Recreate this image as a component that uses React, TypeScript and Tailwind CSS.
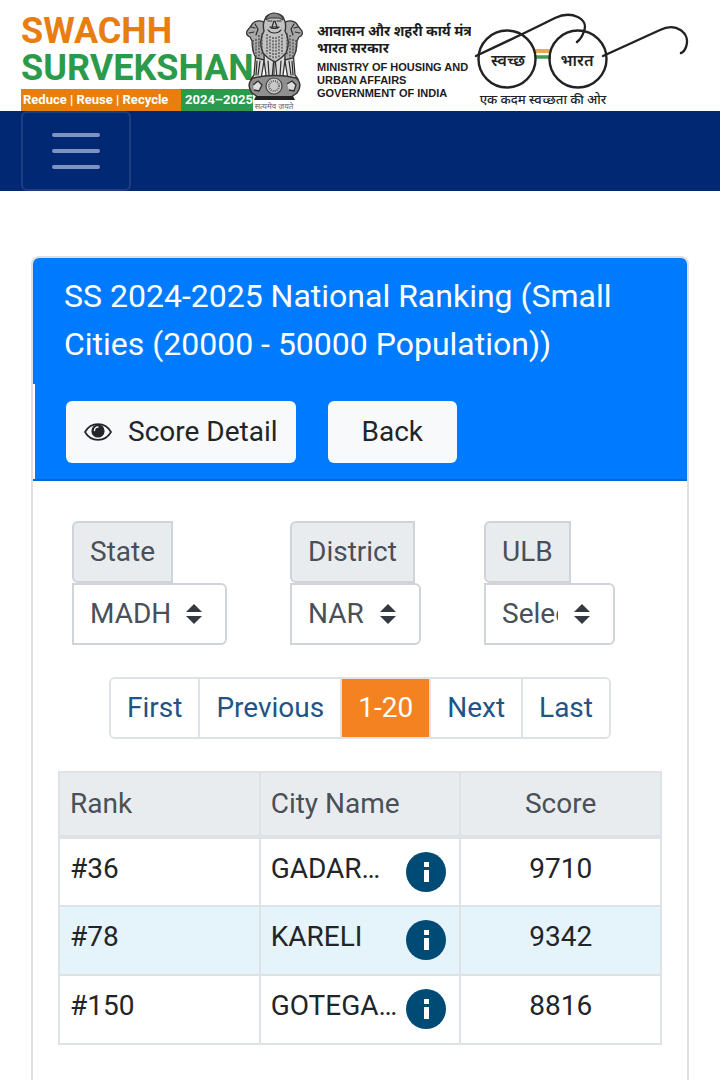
import { useState } from 'react';

const FILTERS = [
  { id: 'state', label: 'State', options: ['MADH'], width: 'w-[155px]' },
  { id: 'district', label: 'District', options: ['NAR'], width: 'w-[131px]' },
  { id: 'ulb', label: 'ULB', options: ['Select'], width: 'w-[131px]' },
];

const PAGES = ['First', 'Previous', '1-20', 'Next', 'Last'];

const CITIES = [
  { rank: '#36', name: 'GADAR…', score: 9710 },
  { rank: '#78', name: 'KARELI', score: 9342 },
  { rank: '#150', name: 'GOTEGA…', score: 8816 },
];

function Emblem() {
  return (
    <svg viewBox="0 0 60 100" className="h-[100px] w-[60px] shrink-0" aria-hidden="true">
      {/* legs */}
      <g fill="#d9d9d9" stroke="#333" strokeWidth="1.3">
        <path d="M11 40l-2 24-3 4h10l4-24zM48 40l2 24 3 4H43l-4-24z" />
        <path d="M18 42l3 22-3 4h9l2-22zM41 42l-3 22 3 4h-9l-2-22z" />
      </g>
      {/* side heads and manes */}
      <g fill="#a9a9a9" stroke="#333" strokeWidth="1.3">
        <path d="M20 12c-5-4-12-2-14 3l-4 5c-1 3 0 5 3 6l2 4c0 6 1 12 4 17l8 2z" />
        <path d="M39 12c5-4 12-2 14 3l4 5c1 3 0 5-3 6l-2 4c0 6-1 12-4 17l-8 2z" />
      </g>
      {/* front lion */}
      <path
        d="M20 8c2-7 17-7 19 0 2 4 2 8 1 12 4 7 4 15 1 22l-5 5-6 4-7-4-5-5c-3-7-3-15 1-22-1-4-1-8 1-12z"
        fill="#c2c2c2"
        stroke="#333"
        strokeWidth="1.4"
      />
      <path d="M21 9c1-5 5-7 8-7s8 2 9 7l-4-2h-9z" fill="#888" stroke="#333" />
      <g fill="none" stroke="#444" strokeWidth="1.2" strokeDasharray="2 1.2">
        <path d="M22 23v20M25 25v22M28 26v22M31 26v22M34 25v22M37 23v20" />
        <path d="M8 29v12M11 28v18M14 24v23M17 22v22M42 22v22M45 24v23M48 28v18M51 29v12" />
      </g>
      <g fill="none" stroke="#2d2d2d" strokeWidth="1.2" strokeLinecap="round">
        <path d="M23 10h4M32 10h4M29 10l-2 6h5l-2-6M23 19c3 4 10 4 13 0M25 16c2 2 7 2 9 0" />
        <path d="M6 16l4 1M4 22l5-1M10 13l3 5-2 6M53 16l-4 1M55 22l-5-1M49 13l-3 5 2 6" />
        <path d="M12 50l-1 14M15 50l-2 14M23 50l1 14M36 50l-1 14M44 50l2 14M47 50l1 14M29 50v17" />
      </g>
      {/* abacus with the wheel */}
      <path d="M8 67c14-3 30-3 43 0 5 4 5 10 1 15l-6 4H13l-6-4c-4-5-4-11 1-15z" fill="#8f8f8f" stroke="#333" strokeWidth="1.5" />
      <circle cx="29" cy="75" r="8" fill="#c9c9c9" stroke="#444" strokeWidth="1.2" />
      <circle cx="29" cy="75" r="5" fill="none" stroke="#666" strokeWidth="2" strokeDasharray="1 1" />
      <path d="M8 74l5-4 4 4-3 6-5-1M42 73l5-3 4 4-2 6-5-1" fill="#ddd" stroke="#2d2d2d" strokeWidth="1.3" />
      <path d="M11 85h37l2 4H9z" fill="#222" />
      <text x="29" y="98" textAnchor="middle" fontSize="8" fill="#666">सत्यमेव जयते</text>
    </svg>
  );
}

function SwachhBharatLogo() {
  return (
    <svg viewBox="0 0 216 100" className="h-[100px] w-[216px] shrink-0" aria-label="स्वच्छ भारत">
      <path d="M62 41h16" stroke="#e9a84a" strokeWidth="4" />
      <path d="M62 47h16" stroke="#3f9c50" strokeWidth="3.5" />
      <g fill="none" stroke="#222" strokeWidth="2.4" strokeLinecap="round">
        <circle cx="34" cy="49" r="28.5" />
        <circle cx="105" cy="49" r="28.5" />
        <path d="M3 46L5 45Q50 24 82 8C99 0 116 9 111 21Q109 28 104 32" />
        <path d="M130 46L187 20C203 12 218 23 213 37Q211 42 208 43" />
      </g>
      <g fill="#222" textAnchor="middle" fontWeight="600">
        <text x="35" y="56" fontSize="16">स्वच्छ</text>
        <text x="104" y="56" fontSize="16">भारत</text>
        <text x="70" y="94" fontSize="13" fontWeight="500">एक कदम स्वच्छता की ओर</text>
      </g>
    </svg>
  );
}

function SiteHeader() {
  return (
    <header className="flex h-[111px] overflow-hidden bg-white pl-[21px]">
      <div className="w-[232px] shrink-0 pt-[13px] font-bold">
        <div className="text-[36px] leading-[37px] text-[#e87e10]">SWACHH</div>
        <div className="text-[36px] leading-[37px] text-[#2b9a4b]">SURVEKSHAN</div>
        <div className="mt-[2px] flex text-[13px] leading-[22px] whitespace-nowrap text-white">
          <span className="w-[160px] bg-[#e87e10] pl-[2px]">Reduce | Reuse | Recycle</span>
          <span className="flex-1 bg-[#2b9a4b] pl-1">2024–2025</span>
        </div>
      </div>
      <div className="-ml-2 pt-[11px]">
        <Emblem />
      </div>
      <div className="ml-3 w-[154px] shrink-0 overflow-hidden pt-[23px] font-bold whitespace-nowrap text-[#1c1c1c]">
        <div className="text-[14px] leading-[17px]">आवासन और शहरी कार्य मंत्रा</div>
        <div className="text-[14px] leading-[17px]">भारत सरकार</div>
        <div className="mt-1 font-['Liberation_Sans',sans-serif] text-[11px] leading-[13px]">
          <div>MINISTRY OF HOUSING AND</div>
          <div>URBAN AFFAIRS</div>
          <div>GOVERNMENT OF INDIA</div>
        </div>
      </div>
      <div className="ml-[2px] pt-[10px]">
        <SwachhBharatLogo />
      </div>
    </header>
  );
}

function Navbar() {
  return (
    <nav className="flex h-20 bg-[#002873] pl-[21px]">
      <button
        type="button"
        aria-label="Toggle navigation"
        className="flex w-[110px] flex-col items-center justify-center gap-3 rounded-md border-2 border-white/10"
      >
        <span className="h-1 w-12 rounded-sm bg-[#8093bd]" />
        <span className="h-1 w-12 rounded-sm bg-[#8093bd]" />
        <span className="h-1 w-12 rounded-sm bg-[#8093bd]" />
      </button>
    </nav>
  );
}

function EyeIcon() {
  return (
    <svg viewBox="0 0 28 20" className="h-5 w-7" aria-hidden="true">
      <path d="M1 10C7-.5 21-.5 27 10 21 20.5 7 20.5 1 10z" fill="none" stroke="currentColor" strokeWidth="1.7" />
      <circle cx="14" cy="9" r="6.6" fill="currentColor" />
      <path d="M10.5 8.5a3.5 3.5 0 0 1 3.5-3.5" fill="none" stroke="#f8f9fa" strokeWidth="1.4" strokeLinecap="round" />
    </svg>
  );
}

function InfoIcon() {
  return (
    <svg viewBox="0 0 40 40" className="size-10" aria-hidden="true">
      <circle cx="20" cy="20" r="20" fill="#004b75" />
      <path d="M18 10h5v5h-5zM18 18h5v12h-5z" fill="#fff" />
    </svg>
  );
}

function Filters() {
  return (
    <div className="flex flex-wrap gap-[63px] px-[39px] pt-10">
      {FILTERS.map(filter => (
        <div key={filter.id} className="flex flex-col items-start">
          <label
            htmlFor={filter.id}
            className="rounded-l-md border-2 border-[#ced4da] bg-[#e9ecef] px-4 py-[10px] leading-[38px] text-[#495057]"
          >
            {filter.label}
          </label>
          <div className="relative">
            <select
              id={filter.id}
              className={`${filter.width} h-[62px] appearance-none rounded-r-md border-2 border-[#ced4da] bg-white pr-[55px] pl-4 text-[#495057]`}
            >
              {filter.options.map(option => (
                <option key={option}>{option}</option>
              ))}
            </select>
            <svg viewBox="0 0 4 5" className="pointer-events-none absolute top-[21px] right-[25px] h-5 w-4" aria-hidden="true">
              <path d="M2 0L0 2h4zm0 5L0 3h4z" fill="#343a40" />
            </svg>
          </div>
        </div>
      ))}
    </div>
  );
}

function Pagination() {
  const [current, setCurrent] = useState('1-20');

  return (
    <div className="mt-8 flex justify-center">
      <div className="flex overflow-hidden rounded-md border-2 border-[#dee2e6]">
        {PAGES.map(page => (
          <button
            key={page}
            type="button"
            onClick={() => setCurrent(page)}
            className={`h-[58px] border-l-2 border-[#dee2e6] px-4 first:border-l-0 ${
              page === current ? 'bg-[#f58220] text-white' : 'bg-white text-[#215486]'
            }`}
          >
            {page}
          </button>
        ))}
      </div>
    </div>
  );
}

function RankingTable() {
  return (
    <div className="mt-8 px-[25px]">
      <table className="w-full table-fixed border-collapse border-2 border-[#dee2e6] text-left">
        <thead className="bg-[#e9ecef] text-[#495057]">
          <tr className="h-[65px] border-b-4 border-[#dee2e6]">
            <th className="border-r-2 border-[#dee2e6] px-[10px] font-normal">Rank</th>
            <th className="border-r-2 border-[#dee2e6] px-[10px] font-normal">City Name</th>
            <th className="px-[10px] text-center font-normal">Score</th>
          </tr>
        </thead>
        <tbody>
          {CITIES.map(city => (
            <tr key={city.rank} className="h-[69px] border-b-2 border-[#dee2e6] align-top even:bg-[#e5f3fb]">
              <td className="border-r-2 border-[#dee2e6] px-[10px] pt-[9px] leading-[42px]">{city.rank}</td>
              <td className="border-r-2 border-[#dee2e6] px-[10px]">
                <div className="flex items-start justify-between">
                  <span className="pt-[9px] leading-[42px]">{city.name}</span>
                  <button type="button" aria-label="City information" className="mt-[13px] mr-[3px]">
                    <InfoIcon />
                  </button>
                </div>
              </td>
              <td className="px-[10px] pt-[9px] text-center leading-[42px]">{city.score}</td>
            </tr>
          ))}
        </tbody>
      </table>
    </div>
  );
}

export default function App() {
  return (
    <div className="flex min-h-screen flex-col bg-white font-[Roboto,'Noto_Sans',sans-serif] text-[28px] text-[#212529]">
      <SiteHeader />
      <Navbar />
      <main className="flex flex-1 flex-col px-[31px] pt-[65px]">
        <section className="flex-1 rounded-t-lg border-2 border-b-0 border-[#dfdfdf]">
          <div className="rounded-t-md border-b-2 border-[#0069d9] bg-[#007bff]">
            <h1 className="px-[31px] pt-[14px] pb-4 text-[32px] leading-[48px] text-white">
              SS 2024-2025 National Ranking (Small Cities (20000 - 50000 Population))
            </h1>
            <div className="flex gap-8 border-l-2 border-white px-[31px] pt-[17px] pb-4">
              <button type="button" className="flex h-[62px] items-center gap-4 rounded-md bg-[#f8f9fa] px-[18px]">
                <EyeIcon />
                Score Detail
              </button>
              <button type="button" className="h-[62px] rounded-md bg-[#f8f9fa] px-[34px]">
                Back
              </button>
            </div>
          </div>
          <Filters />
          <Pagination />
          <RankingTable />
        </section>
      </main>
    </div>
  );
}
